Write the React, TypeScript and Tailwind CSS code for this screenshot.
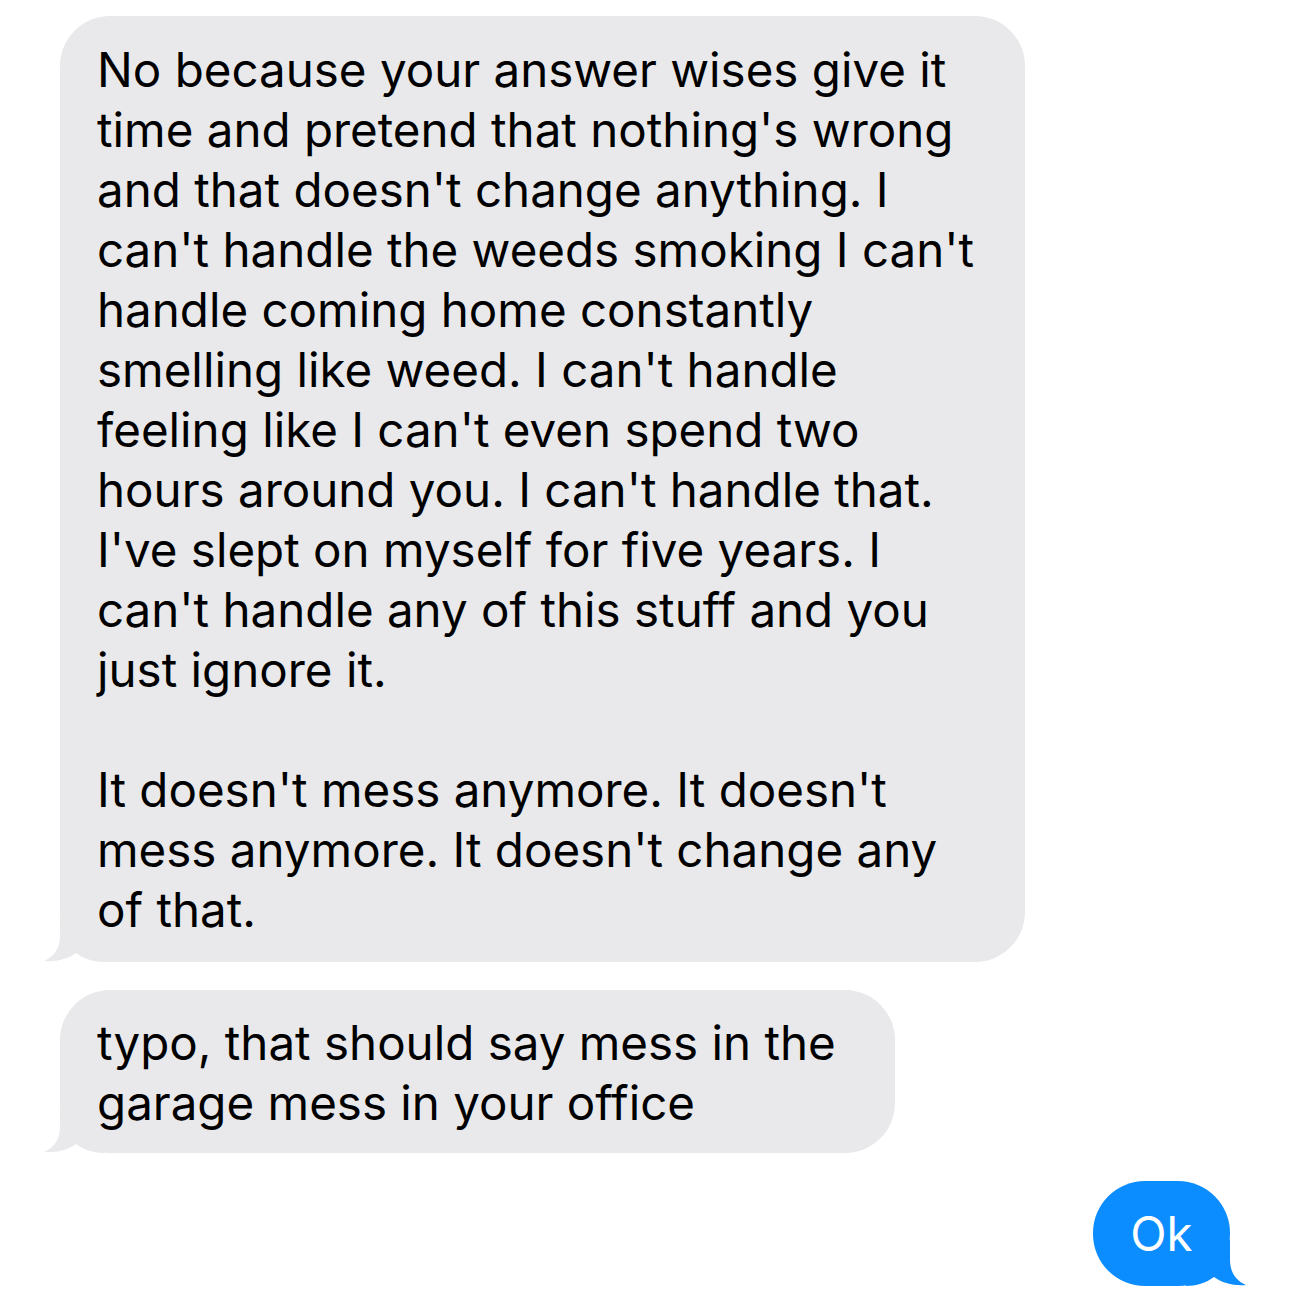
import React from 'react';

const firstMessage = [
  'No because your answer wises give it',
  "time and pretend that nothing's wrong",
  "and that doesn't change anything. I",
  "can't handle the weeds smoking I can't",
  'handle coming home constantly',
  "smelling like weed. I can't handle",
  "feeling like I can't even spend two",
  "hours around you. I can't handle that.",
  "I've slept on myself for five years. I",
  "can't handle any of this stuff and you",
  'just ignore it.',
  '',
  "It doesn't mess anymore. It doesn't",
  "mess anymore. It doesn't change any",
  'of that.',
];

const secondMessage = ['typo, that should say mess in the', 'garage mess in your office'];

function IncomingTail() {
  return (
    <svg className="absolute left-[-16px] bottom-0" width="60" height="46" viewBox="0 0 60 46">
      <path d="M16,0 L16,20 C16,32 10,41 0,45 C12,46 24,43 32,37 C40,43 50,46 60,46 L60,0 Z" fill="#e9e9eb" />
    </svg>
  );
}

function OutgoingTail() {
  return (
    <svg className="absolute right-[-16px] bottom-0" width="60" height="46" viewBox="0 0 60 46">
      <path d="M44,0 L44,20 C44,32 50,41 60,45 C48,46 36,43 28,37 C20,43 10,46 0,46 L0,0 Z" fill="#0b8cff" />
    </svg>
  );
}

function Incoming({ lines, width, pad }: { lines: string[]; width: string; pad: string }) {
  return (
    <div className={`relative ${width}`}>
      <div className={`relative z-10 rounded-[50px] bg-[#e9e9eb] pl-[37px] pr-[30px] ${pad}`}>
        {lines.map((line, i) => (
          <div key={i} className="h-[60px] leading-[60px] whitespace-nowrap">
            {line || '\u00a0'}
          </div>
        ))}
      </div>
      <IncomingTail />
    </div>
  );
}

export default function App() {
  return (
    <div
      className="w-[1290px] h-[1307px] bg-white text-black text-[47.5px] pt-[16px] px-[60px] flex flex-col"
      style={{ fontFamily: 'Inter, "Liberation Sans", sans-serif' }}
    >
      <Incoming lines={firstMessage} width="w-[965px]" pad="pt-[24px] pb-[22px]" />
      <div className="mt-[28px]">
        <Incoming lines={secondMessage} width="w-[835px]" pad="pt-[23px] pb-[20px]" />
      </div>
      <div className="mt-[28px] flex justify-end">
        <div className="relative">
          <div className="relative z-10 w-[137px] h-[105px] rounded-[52px] bg-[#0b8cff] text-white flex items-center justify-center">
            <span className="leading-none">Ok</span>
          </div>
          <OutgoingTail />
        </div>
      </div>
    </div>
  );
}
